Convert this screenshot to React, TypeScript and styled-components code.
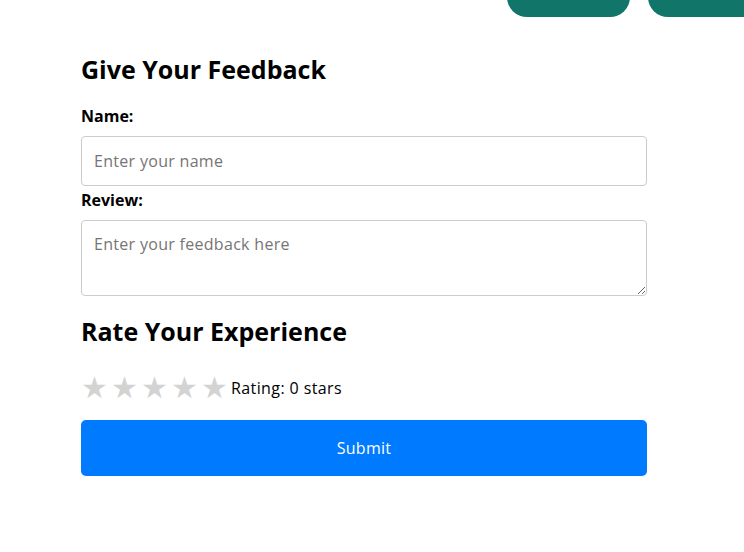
import React, { useState } from 'react';
import styled, { createGlobalStyle } from 'styled-components';

const GlobalStyle = createGlobalStyle`
  * { box-sizing: border-box; }
  body {
    margin: 0;
    background: #fff;
    font-family: 'Open Sans', 'Noto Sans', sans-serif;
    color: #000;
  }
`;

const Page = styled.div`
  width: 744px;
  min-height: 552px;
  overflow: hidden;
`;

const TopBar = styled.div`
  display: flex;
  justify-content: flex-end;
  gap: 18px;
  margin-top: -23px;
  margin-right: -27px;
`;

const Pill = styled.div`
  width: 123px;
  height: 40px;
  border-radius: 20px;
  background: #11756a;
`;

const Form = styled.form`
  width: 566px;
  margin-left: 81px;
  display: flex;
  flex-direction: column;
`;

const Heading = styled.h2<{ $top: number; $bottom: number }>`
  font-size: 25px;
  font-weight: 700;
  line-height: 30px;
  margin: ${(p) => `${p.$top}px 0 ${p.$bottom}px`};
`;

const Label = styled.label<{ $top?: number }>`
  font-size: 16px;
  font-weight: 700;
  line-height: 20px;
  margin-top: ${(p) => p.$top ?? 0}px;
  margin-bottom: 10px;
`;

const Input = styled.input`
  height: 50px;
  border: 1px solid #ccc;
  border-radius: 4px;
  padding: 0 12px;
  font-family: inherit;
  font-size: 16px;
  letter-spacing: 0.3px;
  &::placeholder { color: #757575; }
`;

const TextArea = styled.textarea`
  height: 76px;
  border: 1px solid #ccc;
  border-radius: 4px;
  padding: 12px;
  font-family: inherit;
  font-size: 16px;
  letter-spacing: 0.3px;
  resize: vertical;
  &::placeholder { color: #757575; }
`;

const Stars = styled.div`
  display: flex;
  align-items: center;
  gap: 6px;
  margin-bottom: 20px;
`;

const Star = styled.span<{ $on: boolean }>`
  font-size: 30px;
  line-height: 24px;
  width: 24px;
  text-align: center;
  color: ${(p) => (p.$on ? '#ffc107' : '#d3d3d3')};
  cursor: pointer;
  font-family: 'DejaVu Sans', sans-serif;
`;

const RatingText = styled.span`
  font-size: 16px;
  letter-spacing: 0.4px;
`;

const Submit = styled.button`
  height: 56px;
  border: none;
  border-radius: 5px;
  background: #007bff;
  color: #fff;
  font-family: inherit;
  font-size: 16px;
  letter-spacing: 0.3px;
  cursor: pointer;
`;

export default function App() {
  const [rating, setRating] = useState(0);
  return (
    <Page>
      <GlobalStyle />
      <TopBar>
        <Pill />
        <Pill />
      </TopBar>
      <Form onSubmit={(e) => e.preventDefault()}>
        <Heading $top={37} $bottom={22}>Give Your Feedback</Heading>
        <Label>Name:</Label>
        <Input placeholder="Enter your name" />
        <Label $top={4}>Review:</Label>
        <TextArea placeholder="Enter your feedback here" />
        <Heading $top={20} $bottom={30}>Rate Your Experience</Heading>
        <Stars>
          {[1, 2, 3, 4, 5].map((n) => (
            <Star key={n} $on={n <= rating} onClick={() => setRating(n)}>★</Star>
          ))}
          <RatingText>Rating: {rating} stars</RatingText>
        </Stars>
        <Submit type="submit">Submit</Submit>
      </Form>
    </Page>
  );
}
